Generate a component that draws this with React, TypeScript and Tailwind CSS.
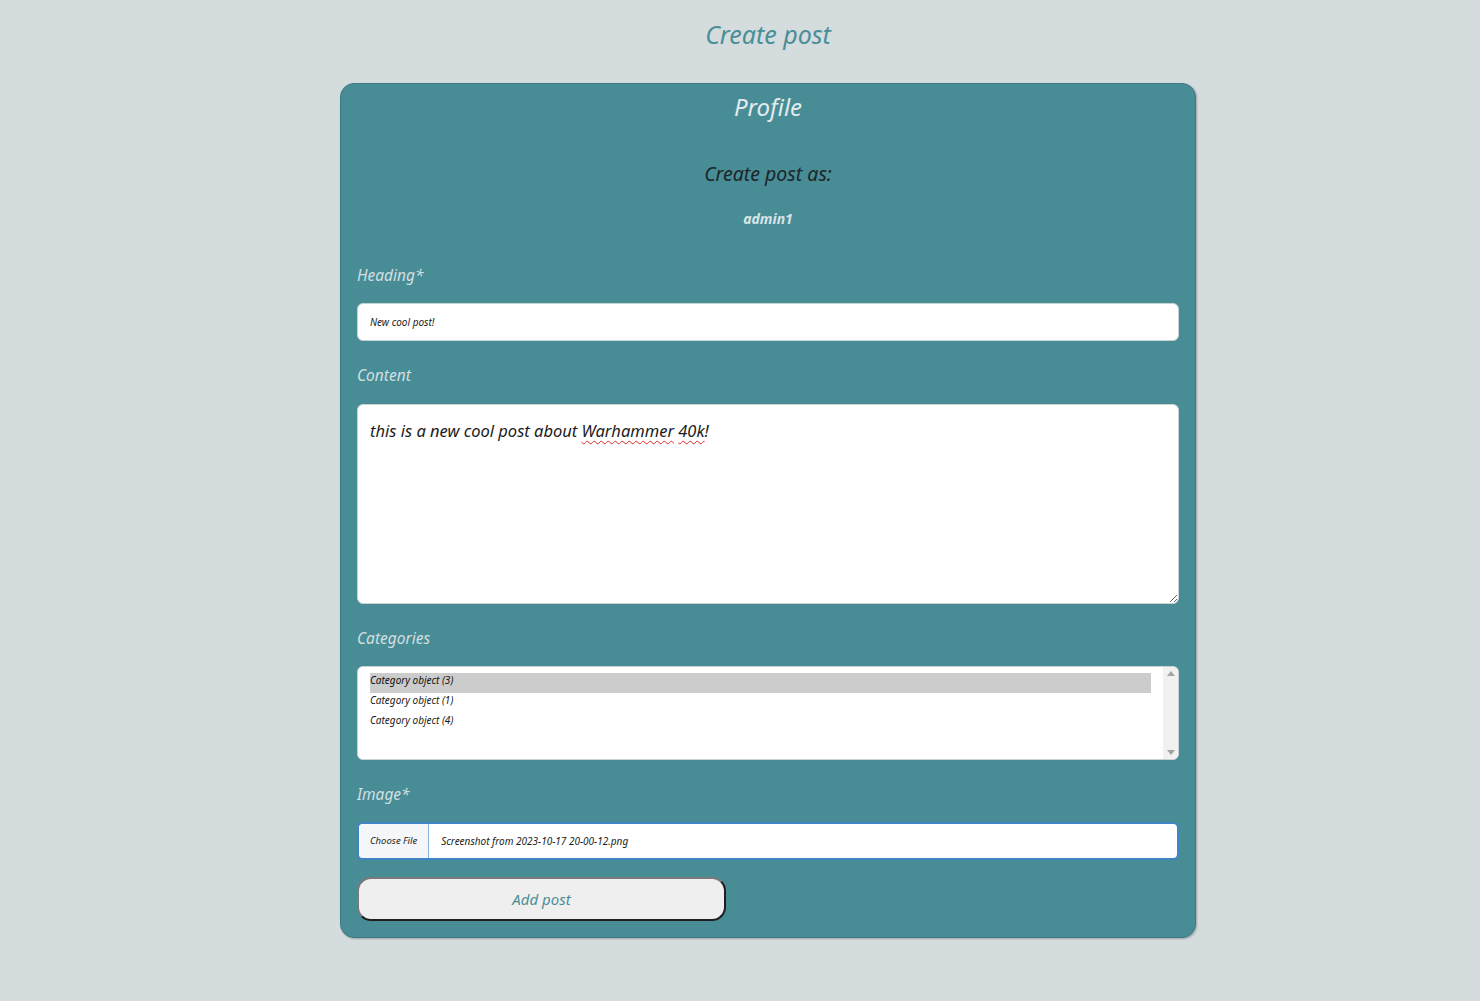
import { useState } from "react";

const font = "font-['Noto_Sans','DejaVu_Sans_Condensed',sans-serif] italic";

function Label({ children }: { children: React.ReactNode }) {
  return (
    <div className="text-[15.5px] leading-[28px] text-[#d2dfe1]">{children}</div>
  );
}

export default function App() {
  const [heading, setHeading] = useState("New cool post!");
  const [cats, setCats] = useState<string[]>(["3"]);

  return (
    <div className={`min-h-[1001px] bg-[#d4dcde] pt-[14px] pl-[56px] ${font}`}>
      <h1 className="text-center text-[25px] leading-[40px] text-[#4a8e98]">
        Create post
      </h1>

      <form
        onSubmit={(e) => e.preventDefault()}
        className="mx-auto mt-[29px] w-[856px] rounded-[14px] border border-[#3d7b84] bg-[#488c96] px-[16px] pt-[3px] pb-[16px] shadow-[1px_1px_2px_rgba(0,0,0,0.25)]"
      >
        <h2 className="text-center text-[24px] leading-[40px] text-[#e2ebec]">
          Profile
        </h2>
        <h3 className="mt-[31px] text-center text-[19.5px] leading-[32px] text-[#1c2628]">
          Create post as:
        </h3>
        <p className="mt-[17px] text-center text-[14px] font-bold leading-[24px] text-[#d8e4e6]">
          admin1
        </p>

        <div className="mt-[30px]">
          <Label>Heading*</Label>
        </div>
        <input
          value={heading}
          onChange={(e) => setHeading(e.target.value)}
          className={`mt-[14px] block h-[38px] w-full rounded-[6px] border border-[#c9d2d4] bg-white px-[12px] text-[10px] text-[#1c1c1c] outline-none ${font}`}
        />

        <div className="mt-[20px]">
          <Label>Content</Label>
        </div>
        <div
          role="textbox"
          className="mt-[15px] h-[200px] w-full resize overflow-auto rounded-[6px] border border-[#c9d2d4] bg-white px-[12px] pt-[12px] text-[16.5px] leading-[28px] text-[#1c1c1c]"
        >
          this is a new cool post about{" "}
          <span className="underline decoration-[#e0282a] decoration-wavy decoration-1 underline-offset-[3px]">
            Warhammer
          </span>{" "}
          <span className="underline decoration-[#e0282a] decoration-wavy decoration-1 underline-offset-[3px]">
            40k
          </span>
          !
        </div>

        <div className="mt-[20px]">
          <Label>Categories</Label>
        </div>
        <div className="mt-[14px] flex h-[94px] w-full overflow-hidden rounded-[6px] border border-[#c9d2d4] bg-white">
          <select
            multiple
            value={cats}
            onChange={(e) =>
              setCats(Array.from(e.target.selectedOptions).map((o) => o.value))
            }
            className={`block h-full flex-1 overflow-hidden bg-white px-[12px] py-[6px] text-[10px] text-[#1c1c1c] outline-none ${font}`}
          >
            <option value="3" className="h-[20px] leading-[20px] checked:bg-[#cccccc]">
              Category object (3)
            </option>
            <option value="1" className="h-[20px] leading-[20px]">
              Category object (1)
            </option>
            <option value="4" className="h-[20px] leading-[20px]">
              Category object (4)
            </option>
          </select>
          <div className="flex w-[15px] flex-col items-center justify-between bg-[#f1f1f1] py-[4px]">
            <svg width="8" height="5" viewBox="0 0 8 5">
              <path d="M0 5 L4 0 L8 5 Z" fill="#a3a3a3" />
            </svg>
            <svg width="8" height="5" viewBox="0 0 8 5">
              <path d="M0 0 L8 0 L4 5 Z" fill="#a3a3a3" />
            </svg>
          </div>
        </div>

        <div className="mt-[20px]">
          <Label>Image*</Label>
        </div>
        <div className="mt-[14px] flex h-[38px] w-full items-center overflow-hidden rounded-[6px] border-2 border-[#3f84c6] bg-white text-[10px] text-[#1c1c1c]">
          <button
            type="button"
            className={`h-full border-r border-[#8ab4dd] bg-[#f4f6f9] px-[11px] text-[9.5px] text-[#1c1c1c] ${font}`}
          >
            Choose File
          </button>
          <span className="pl-[12px]">Screenshot from 2023-10-17 20-00-12.png</span>
        </div>

        <button
          type="submit"
          className={`mt-[17px] block h-[44px] w-[369px] rounded-[14px] border-2 border-t-[#7a7a7a] border-l-[#7a7a7a] border-r-[#1e1e1e] border-b-[#1e1e1e] bg-[#efefef] text-[15px] text-[#4a8e98] ${font}`}
        >
          Add post
        </button>
      </form>
    </div>
  );
}
